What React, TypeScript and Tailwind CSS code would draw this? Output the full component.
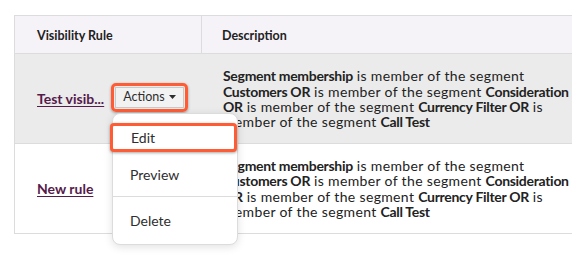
import React from 'react';

const B = ({ children }: { children: React.ReactNode }) => <span className="font-bold tracking-[-0.3px]">{children}</span>;

const Description: React.FC = () => (
  <div className="text-[14px] leading-[15.3px] tracking-[0.35px] text-[#222222] whitespace-nowrap">
    <div><B>Segment membership</B> is member of the segment</div>
    <div><B>Customers OR</B> is member of the segment <B>Consideration</B></div>
    <div><B>OR</B> is member of the segment <B>Currency Filter OR</B> is</div>
    <div>member of the segment <B>Call Test</B></div>
  </div>
);

export default function App() {
  return (
    <div className="relative w-[572px] h-[258px] bg-white overflow-hidden pt-[15px] pl-[14px]" style={{ fontFamily: 'Lato, "Noto Sans", sans-serif' }}>
      <div className="border-t border-l border-b border-[#dcdcdc]">
        <div className="flex h-[38px] bg-[#f6f3f8] border-b border-[#dcdcdc] text-[12.5px] font-bold text-[#222222]">
          <div className="w-[187px] border-r border-[#dcdcdc] flex items-center pl-[22px] pt-[4px]">Visibility Rule</div>
          <div className="flex-1 flex items-center pl-[20px] pt-[4px]">Description</div>
        </div>
        <div className="flex h-[90px] bg-[#ebebeb] border-b border-[#dcdcdc]">
          <div className="w-[187px] flex items-center pl-[22px]">
            <a className="text-[14px] font-bold text-[#561a4b] underline underline-offset-2">Test visib...</a>
            <div className="ml-[7px] mb-[3px] rounded-[5px] border-[3px] border-[#ff5c35] p-[1px] shadow-[0_1px_3px_rgba(0,0,0,0.35)]">
              <div className="flex items-center gap-[4px] h-[21px] px-[7px] border border-[#c9c9c9] bg-[#f2f2f2] text-[12.5px] text-[#2e2e2e]">
                Actions
                <svg width="7" height="4" viewBox="0 0 7 4"><path d="M0 0h7L3.5 4z" fill="#2e2e2e" /></svg>
              </div>
            </div>
          </div>
          <div className="flex-1 min-w-0 flex items-center pl-[21px] pt-[1px]">
            <Description />
          </div>
        </div>
        <div className="flex h-[89px] bg-white">
          <div className="w-[187px] flex items-center pl-[22px]">
            <a className="text-[14px] font-bold text-[#561a4b] underline underline-offset-2">New rule</a>
          </div>
          <div className="flex-1 min-w-0 flex items-center pl-[21px]">
            <Description />
          </div>
        </div>
      </div>

      <div className="absolute left-[112px] top-[113px] w-[126px] h-[132px] bg-white rounded-[8px] border border-[#dcdcdc] shadow-[0_2px_8px_rgba(0,0,0,0.12)] text-[14px] text-[#2e2e2e] flex flex-col">
        <div className="h-[9px]" />
        <div className="-ml-[3px] h-[29px] rounded-[4px] border-[3px] border-[#ff5c35] bg-white flex items-center pl-[18px] shadow-[0_1px_3px_rgba(0,0,0,0.35)]">Edit</div>
        <div className="h-[46px] flex items-center pl-[17px] border-b border-[#dcdcdc]">Preview</div>
        <div className="h-[47px] flex items-center pl-[17px]">Delete</div>
      </div>
    </div>
  );
}
